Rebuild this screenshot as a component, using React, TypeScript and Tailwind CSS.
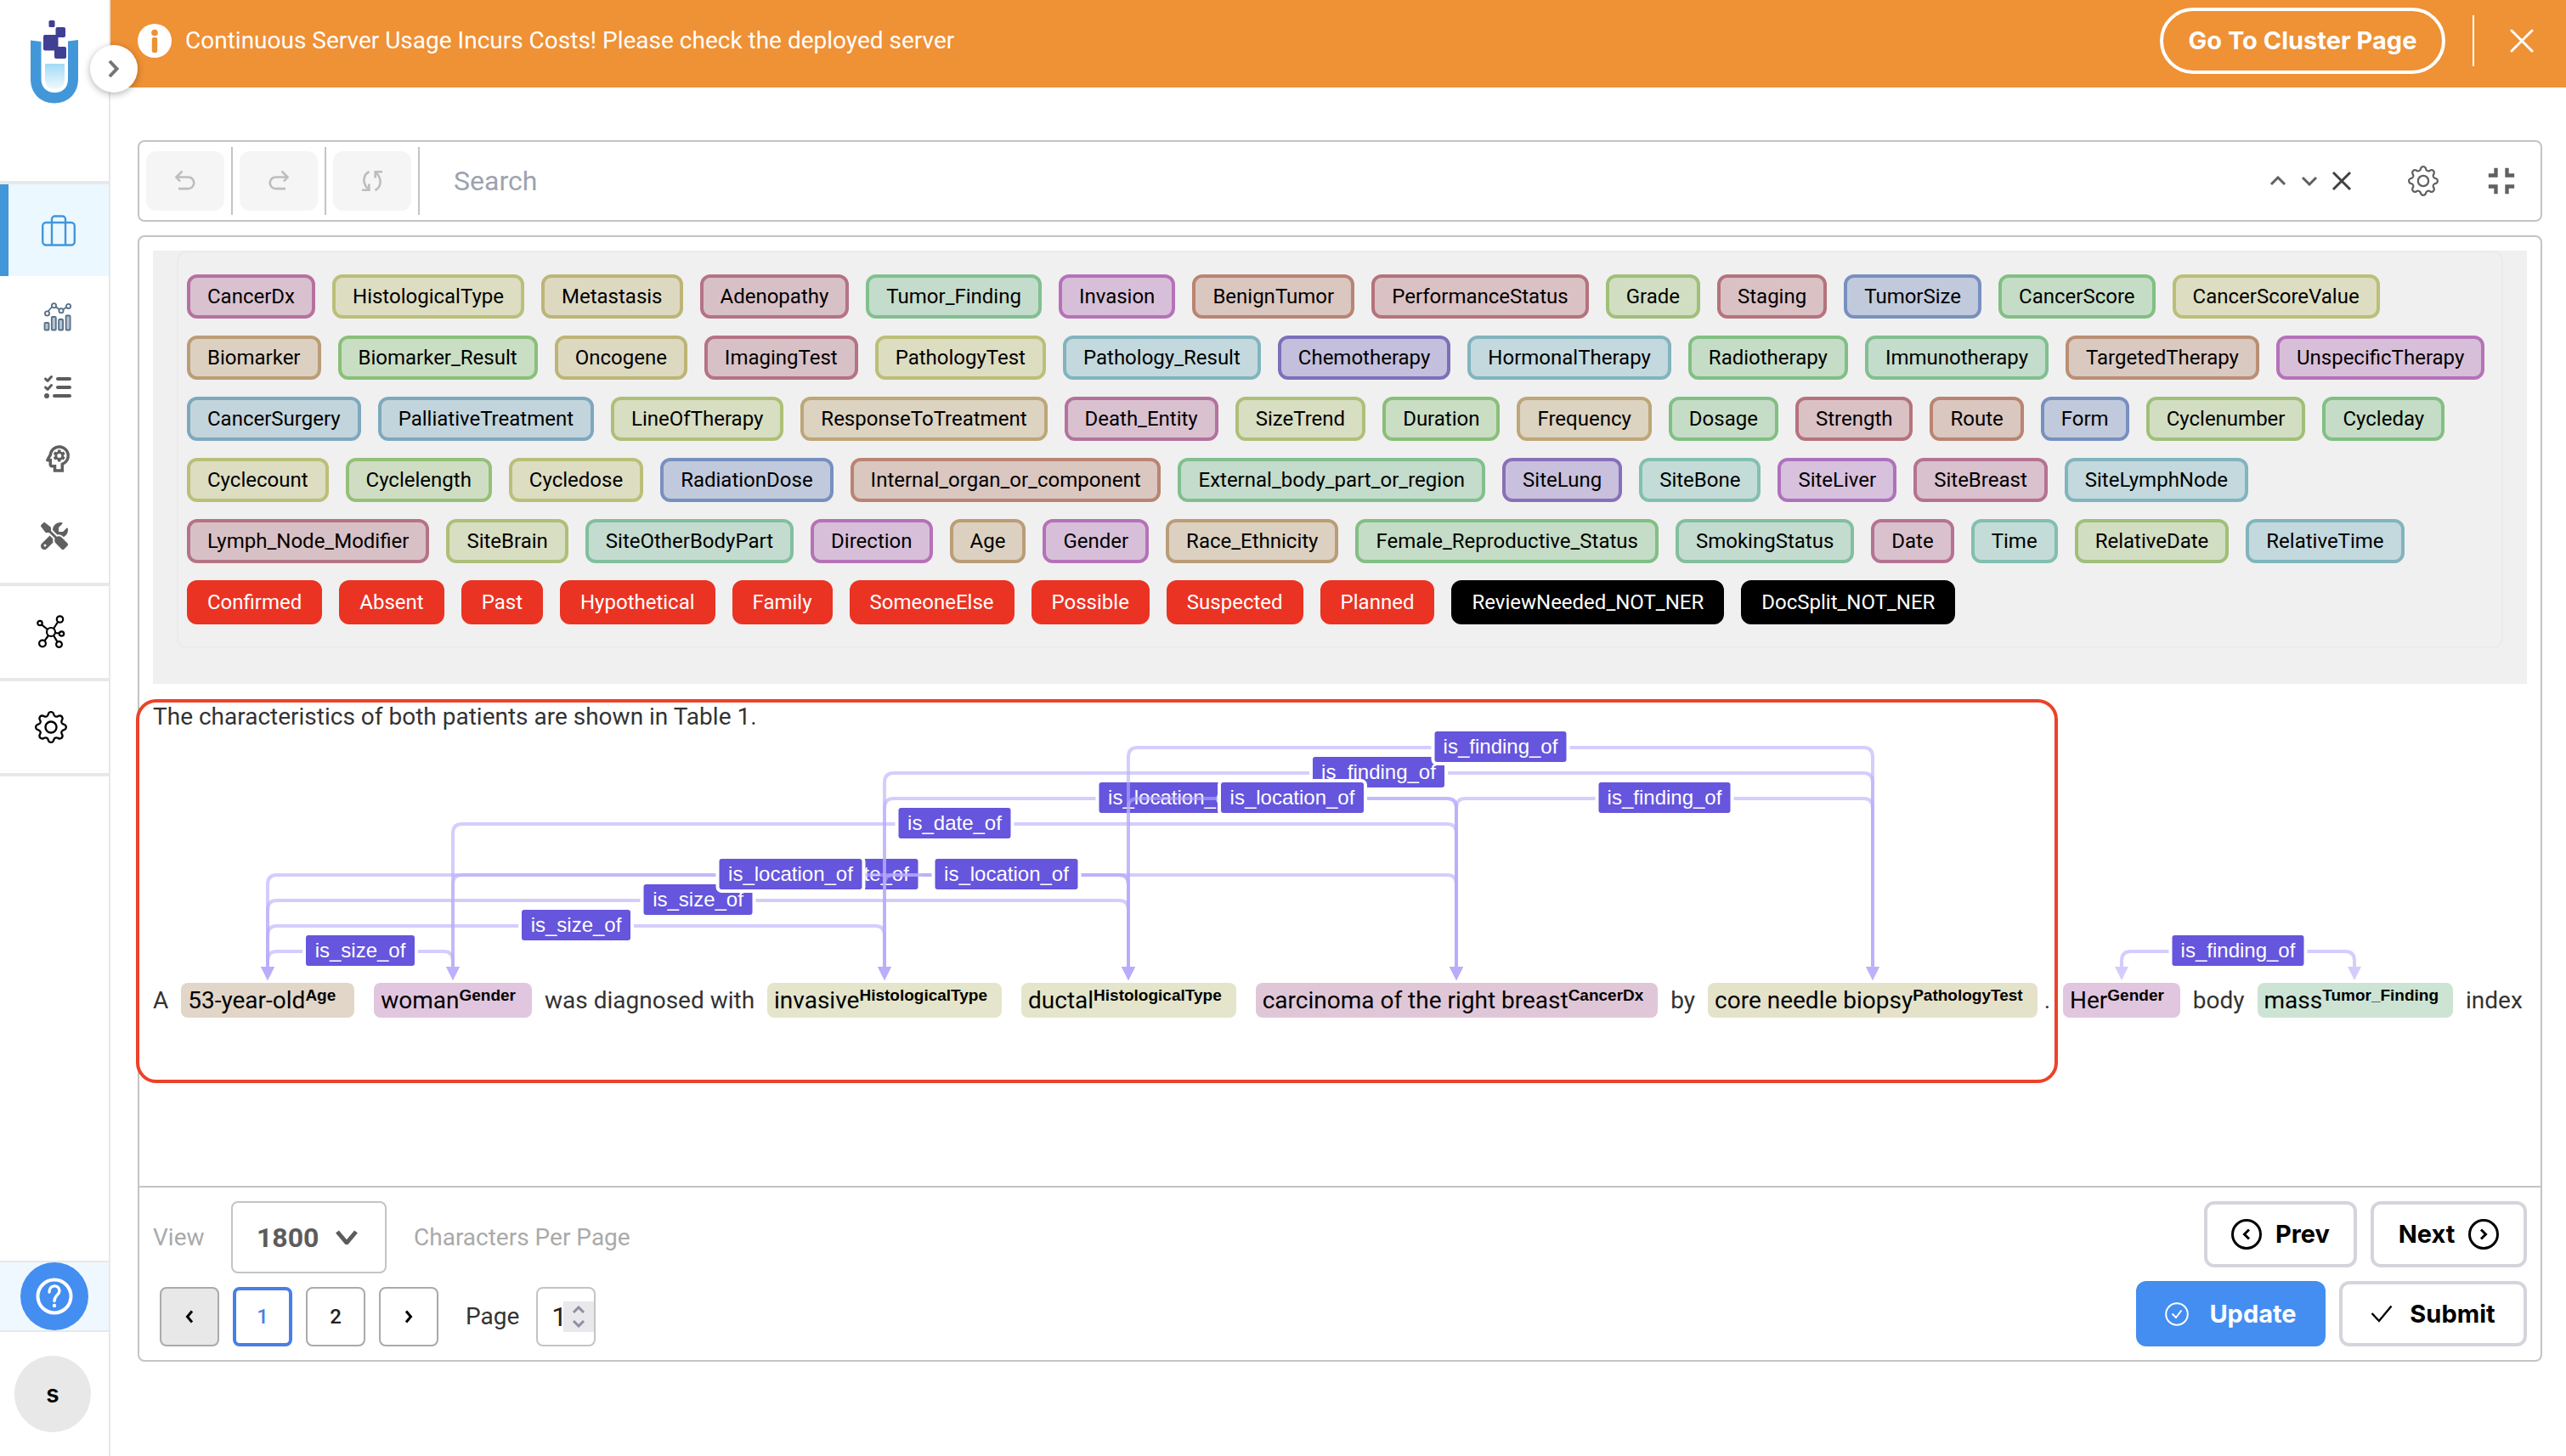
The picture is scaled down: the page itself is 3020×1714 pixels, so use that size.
import React from "react";
import { BsGear } from "react-icons/bs";
import { FaListCheck, FaScrewdriverWrench } from "react-icons/fa6";
import { MdFullscreenExit, MdOutlinePsychology } from "react-icons/md";

const PINK = "border-[#b5729e] bg-[#d9c1d0]";
const ROSE = "border-[#b57386] bg-[#d8c1c6]";
const RED = "border-[#b5737d] bg-[#dac1c4]";
const BERRY = "border-[#b57393] bg-[#d9c1cd]";
const PURPLE = "border-[#b572b8] bg-[#d8bfd9]";
const VIOLET = "border-[#8870b9] bg-[#c8c0dc]";
const INDIGO = "border-[#7b70b9] bg-[#c3bfdc]";
const BLUE = "border-[#7890bf] bg-[#c1cadc]";
const STEEL = "border-[#7ea8bd] bg-[#c3d5dc]";
const CYAN = "border-[#82b4be] bg-[#c3d9de]";
const TEAL = "border-[#82bfb0] bg-[#c4dcd8]";
const MINT = "border-[#82bf9f] bg-[#c4dcd0]";
const SEA = "border-[#82bf90] bg-[#c4dccb]";
const GREEN = "border-[#82bf84] bg-[#c5ddc6]";
const LEAF = "border-[#8abf7a] bg-[#c9dec3]";
const LIME = "border-[#a0bf79] bg-[#d2dec2]";
const MOSS = "border-[#aebf78] bg-[#d8dec2]";
const OLIVE = "border-[#bbbf78] bg-[#ddddc2]";
const KHAKI = "border-[#bdb577] bg-[#ddd9c1]";
const SAND = "border-[#bda678] bg-[#dcd3c1]";
const TAN = "border-[#ba9d77] bg-[#dcd1c1]";
const CLAY = "border-[#ba8f74] bg-[#dac9c1]";
const BRICK = "border-[#ba8472] bg-[#dac7c0]";
const ALERT = "border-[#ea3323] bg-[#ea3323] text-white";
const BLACK = "border-black bg-black text-white";

const LABELS: [string, string][] = [
  ["CancerDx", PINK],
  ["HistologicalType", OLIVE],
  ["Metastasis", KHAKI],
  ["Adenopathy", ROSE],
  ["Tumor_Finding", SEA],
  ["Invasion", PURPLE],
  ["BenignTumor", BRICK],
  ["PerformanceStatus", RED],
  ["Grade", LIME],
  ["Staging", RED],
  ["TumorSize", BLUE],
  ["CancerScore", GREEN],
  ["CancerScoreValue", OLIVE],
  ["Biomarker", TAN],
  ["Biomarker_Result", LEAF],
  ["Oncogene", KHAKI],
  ["ImagingTest", ROSE],
  ["PathologyTest", OLIVE],
  ["Pathology_Result", CYAN],
  ["Chemotherapy", INDIGO],
  ["HormonalTherapy", CYAN],
  ["Radiotherapy", GREEN],
  ["Immunotherapy", SEA],
  ["TargetedTherapy", CLAY],
  ["UnspecificTherapy", PURPLE],
  ["CancerSurgery", STEEL],
  ["PalliativeTreatment", STEEL],
  ["LineOfTherapy", MOSS],
  ["ResponseToTreatment", SAND],
  ["Death_Entity", PINK],
  ["SizeTrend", MOSS],
  ["Duration", LEAF],
  ["Frequency", SAND],
  ["Dosage", GREEN],
  ["Strength", RED],
  ["Route", BRICK],
  ["Form", BLUE],
  ["Cyclenumber", LIME],
  ["Cycleday", GREEN],
  ["Cyclecount", OLIVE],
  ["Cyclelength", "border-[#96bf79] bg-[#cfdec3]"],
  ["Cycledose", OLIVE],
  ["RadiationDose", BLUE],
  ["Internal_organ_or_component", BRICK],
  ["External_body_part_or_region", SEA],
  ["SiteLung", VIOLET],
  ["SiteBone", TEAL],
  ["SiteLiver", "border-[#ae72bc] bg-[#d7c1dd]"],
  ["SiteBreast", BERRY],
  ["SiteLymphNode", CYAN],
  ["Lymph_Node_Modifier", ROSE],
  ["SiteBrain", MOSS],
  ["SiteOtherBodyPart", MINT],
  ["Direction", PURPLE],
  ["Age", TAN],
  ["Gender", PURPLE],
  ["Race_Ethnicity", TAN],
  ["Female_Reproductive_Status", GREEN],
  ["SmokingStatus", MINT],
  ["Date", BERRY],
  ["Time", TEAL],
  ["RelativeDate", LIME],
  ["RelativeTime", CYAN],
  ["Confirmed", ALERT],
  ["Absent", ALERT],
  ["Past", ALERT],
  ["Hypothetical", ALERT],
  ["Family", ALERT],
  ["SomeoneElse", ALERT],
  ["Possible", ALERT],
  ["Suspected", ALERT],
  ["Planned", ALERT],
  ["ReviewNeeded_NOT_NER", BLACK],
  ["DocSplit_NOT_NER", BLACK],
];

const LABEL_WIDTHS: Record<string, number> = {
  is_size_of: 128,
  is_date_of: 132,
  is_finding_of: 155,
  is_location_of: 168,
};

// [from x, to x, rail y, relation], in the order they are painted
const RELATIONS: [number, number, number, string][] = [
  [135, 353, 290, "is_size_of"],
  [135, 861, 260, "is_size_of"],
  [135, 1148, 230, "is_size_of"],
  [135, 1534, 200, "is_date_of"],
  [353, 1148, 200, "is_location_of"],
  [353, 1534, 140, "is_date_of"],
  [861, 1148, 200, "is_location_of"],
  [861, 1534, 110, "is_location_of"],
  [861, 2024, 80, "is_finding_of"],
  [1148, 1534, 110, "is_location_of"],
  [1148, 2024, 50, "is_finding_of"],
  [1534, 2024, 110, "is_finding_of"],
  [2317, 2591, 290, "is_finding_of"],
];

function Relations() {
  return (
    <svg
      className="pointer-events-none absolute left-0 top-[7px] overflow-visible"
      width="2794"
      height="400"
      viewBox="0 0 2794 400"
    >
      {RELATIONS.map(([a, b, y, name], i) => {
        const w = LABEL_WIDTHS[name];
        const mid = (a + b) / 2;
        return (
          <g key={i}>
            <g opacity="0.6">
              <path
                d={`M${a} 309V${y + 11}Q${a} ${y} ${a + 11} ${y}H${b - 11}Q${b} ${y} ${b} ${y + 11}V309`}
                fill="none"
                stroke="#b8adfb"
                strokeWidth="4"
              />
              <path d={`M${a - 8} 308h16l-8 16zM${b - 8} 308h16l-8 16z`} fill="#b8adfb" />
            </g>
            <rect
              x={mid - w / 2}
              y={y - 19}
              width={w}
              height="36"
              rx="3"
              fill="#6655dd"
              stroke="white"
              strokeWidth="8"
              paintOrder="stroke"
            />
            <text
              x={mid}
              y={y + 7}
              textAnchor="middle"
              fill="white"
              fontSize="24"
              fontFamily='"Liberation Sans", Arial, sans-serif'
            >
              {name}
            </text>
          </g>
        );
      })}
    </svg>
  );
}

function Entity({ text, type, tone, pad = "pr-[17px]" }: { text: string; type: string; tone: string; pad?: string }) {
  return (
    <span className={`mx-2 inline-block h-[41px] rounded-lg pl-2 leading-[41px] text-black ${pad} ${tone}`}>
      {text}
      <sup className="font-['Liberation_Sans',sans-serif] text-[19px] leading-none font-bold">{type}</sup>
    </span>
  );
}

function Logo() {
  return (
    <svg width="56" height="98" viewBox="36 24 56 98">
      <defs>
        <linearGradient id="liquid" x1="0" y1="0" x2="0" y2="1">
          <stop offset="0" stopColor="#a3daf7" />
          <stop offset="1" stopColor="#eff9fe" />
        </linearGradient>
      </defs>
      <path
        d="M36 47.5L48.500 49V93C48.500 103 55 109 64.500 109S80 103 80 93V48.500L92 47V93C92 110 80 121.500 64 121.500S36 110 36 93Z"
        fill="#4297d9"
      />
      <path d="M53 75H76V93C76 101 71 105 64.500 105S53 101 53 93Z" fill="url(#liquid)" />
      <g fill="#3f3f94">
        <rect x="57.500" y="24" width="7" height="8" rx="1.500" />
        <rect x="65.500" y="32" width="11.500" height="12" rx="2" />
        <rect x="51" y="41" width="17.500" height="18.500" rx="2" />
        <rect x="64" y="55" width="14" height="14" rx="2" />
      </g>
    </svg>
  );
}

function BriefcaseIcon() {
  return (
    <svg width="40" height="37" viewBox="0 0 40 37" fill="none" stroke="#4297d9" strokeWidth="2.400">
      <rect x="1.200" y="9" width="37.600" height="26.500" rx="4" />
      <path d="M12 35V5a3.500 3.500 0 0 1 3.500-3.500h9A3.500 3.500 0 0 1 28 5V35" />
    </svg>
  );
}

function AnalyticsIcon() {
  return (
    <svg width="34" height="34" viewBox="0 0 34 34" fill="none" stroke="#56708a" strokeWidth="1.800">
      <path d="M5.500 10.500L10.500 5M14.500 5L19 8.500M23 8.500L27.500 5.500" />
      <circle cx="4.500" cy="13" r="2.600" />
      <circle cx="12.500" cy="3.800" r="2.600" />
      <circle cx="21" cy="9.800" r="2.600" />
      <circle cx="29.500" cy="4.400" r="2.600" />
      <g fill="#b9c3cd">
        <rect x="1.500" y="24" width="5" height="8.500" rx="1" />
        <rect x="9.800" y="17" width="5" height="15.500" rx="1" />
        <rect x="18.100" y="20" width="5" height="12.500" rx="1" />
        <rect x="26.600" y="15.500" width="5" height="17" rx="1" />
      </g>
    </svg>
  );
}

function NetworkIcon() {
  return (
    <svg width="36" height="40" viewBox="0 0 36 40" fill="none" stroke="black" strokeWidth="2.200">
      <circle cx="18" cy="20" r="5" />
      <circle cx="5" cy="9.500" r="2.700" />
      <circle cx="28.500" cy="5" r="3.700" />
      <circle cx="30.500" cy="22" r="2.700" />
      <circle cx="8" cy="33.500" r="3.900" />
      <circle cx="27.500" cy="34.500" r="3.400" />
      <path d="M7 11.300L14 17M21 16L26.200 8M23 21L27.800 21.600M15 24L10.500 30.300M21 24L25.500 31.600" />
    </svg>
  );
}

function UndoIcon() {
  return (
    <svg width="26" height="26" viewBox="0 0 26 26" fill="none" stroke="#bdbdbd" strokeWidth="2.600">
      <path d="M9.500 1.500L2.500 8.500L7 13.500M2.500 8.500H16.500a6.800 6.800 0 0 1 0 13.600H5" />
    </svg>
  );
}

function RedoIcon() {
  return (
    <svg width="26" height="26" viewBox="0 0 26 26" fill="none" stroke="#bdbdbd" strokeWidth="2.600">
      <path d="M16.500 1.500L23.500 8.500L19 13.500M23.500 8.500H9.500a6.800 6.800 0 0 0 0 13.600H21" />
    </svg>
  );
}

function ResetIcon() {
  return (
    <svg width="26" height="26" viewBox="0 0 26 26" fill="none" stroke="#bdbdbd" strokeWidth="2.600">
      <path d="M9.500 2C3 5.500 .5 14 8 22.500M16.500 24C23 20.500 25.500 12 18 3.500" />
      <path d="M1 23.700H9.300V16.500M25 2.300H16.700V9.500" />
    </svg>
  );
}

function Chevron({ d, w = 20, h = 12, stroke = 3, color = "#606060" }: { d: "up" | "down"; w?: number; h?: number; stroke?: number; color?: string }) {
  return (
    <svg width={w} height={h} viewBox={`0 0 ${w} ${h}`} fill="none" stroke={color} strokeWidth={stroke}>
      {d === "up" ? (
        <path d={`M2 ${h - 2}L${w / 2} 2L${w - 2} ${h - 2}`} />
      ) : (
        <path d={`M2 2L${w / 2} ${h - 2}L${w - 2} 2`} />
      )}
    </svg>
  );
}

function CircleArrow({ dir }: { dir: "left" | "right" }) {
  return (
    <svg width="36" height="36" viewBox="0 0 36 36" fill="none" stroke="black" strokeWidth="3">
      <circle cx="18" cy="18" r="16.500" />
      <path d={dir === "left" ? "M21 12.500L15.500 18L21 23.500" : "M15 12.500L20.500 18L15 23.500"} />
    </svg>
  );
}

function Sidebar() {
  return (
    <aside className="relative z-10 flex w-[130px] shrink-0 flex-col border-r-2 border-[#e8e8e8] bg-white">
      <a href="#home" aria-label="Home" className="flex h-[213px] justify-center pt-6">
        <Logo />
      </a>
      <button
        aria-label="Expand menu"
        className="absolute -right-[34px] top-[53px] flex size-14 items-center justify-center rounded-full bg-white shadow-[0_2px_8px_rgba(0,0,0,0.3)]"
      >
        <svg width="16" height="22" viewBox="0 0 16 22" fill="none" stroke="#757575" strokeWidth="4">
          <path d="M3 2L11.500 11L3 20" />
        </svg>
      </button>
      <nav className="flex flex-col">
        <a
          href="#projects"
          aria-label="Projects"
          className="box-content flex h-[108px] items-center justify-center border-t-4 border-[#e8e8e8] bg-[#ebf8ff]"
        >
          <span className="w-[10px] self-stretch bg-[#4297d9]" />
          <span className="flex flex-1 justify-center">
            <BriefcaseIcon />
          </span>
        </a>
        <a href="#analytics" aria-label="Analytics" className="flex h-[92px] items-center justify-center pl-2 pt-1">
          <AnalyticsIcon />
        </a>
        <a href="#tasks" aria-label="Tasks" className="flex h-[78px] items-center justify-center pl-2">
          <FaListCheck size={32} color="#5c5c5c" />
        </a>
        <a href="#models" aria-label="Models" className="flex h-[90px] items-center justify-center pl-2">
          <MdOutlinePsychology size={42} color="#606060" />
        </a>
        <a href="#tools" aria-label="Tools" className="flex h-[101px] items-center justify-center pb-[10px]">
          <FaScrewdriverWrench size={32} color="#606060" />
        </a>
        <a
          href="#network"
          aria-label="Clusters"
          className="flex h-[112px] items-center justify-center border-t-4 border-[#e8e8e8] pr-2"
        >
          <NetworkIcon />
        </a>
        <a
          href="#settings"
          aria-label="Settings"
          className="flex h-[116px] items-center justify-center border-y-4 border-[#e8e8e8] pr-2"
        >
          <BsGear size={38} color="black" />
        </a>
      </nav>
      <div className="mt-auto flex justify-center border-y-2 border-[#e8e8e8] bg-[#f0f8ff]">
        <button aria-label="Help" className="flex size-20 items-center justify-center rounded-full bg-[#438ef0]">
          <svg width="44" height="44" viewBox="0 0 44 44" fill="none" stroke="white" strokeWidth="4">
            <circle cx="22" cy="22" r="19.500" />
            <path d="M16 17C16 7.500 28 8 28 15.500C28 20.500 22 20.500 22 27.500" strokeWidth="3.400" strokeLinecap="round" />
            <circle cx="22" cy="33" r="2.200" fill="white" stroke="none" />
          </svg>
        </button>
      </div>
      <div className="mb-7 ml-[17px] mt-7 flex size-[90px] items-center justify-center rounded-full bg-[#e8e8e8]">
        <button aria-label="Account" className="font-['Inter',sans-serif] text-[28px] font-semibold text-black">
          s
        </button>
      </div>
    </aside>
  );
}

function Banner() {
  return (
    <div className="flex h-[103px] items-start bg-[#ef9135] pl-8 pr-[38px] text-white">
      <div className="flex h-24 flex-1 items-center">
        <svg width="40" height="40" viewBox="0 0 40 40">
          <circle cx="20" cy="20" r="20" fill="white" />
          <circle cx="20" cy="10.500" r="3.800" fill="#ef9135" />
          <rect x="16.800" y="16" width="6.400" height="18" rx="2" fill="#ef9135" />
        </svg>
        <p className="ml-4 text-[28px] leading-10">
          Continuous Server Usage Incurs Costs! Please check the deployed server
        </p>
        <button className="ml-auto h-[78px] w-[336px] rounded-full border-4 border-white font-['Inter',sans-serif] text-[29px] font-bold">
          Go To Cluster Page
        </button>
        <span className="ml-8 h-[60px] w-[2px] bg-white" />
        <button aria-label="Close" className="ml-[42px]">
          <svg width="28" height="28" viewBox="0 0 28 28" fill="none" stroke="white" strokeWidth="3" strokeLinecap="round">
            <path d="M2 2L26 26M26 2L2 26" />
          </svg>
        </button>
      </div>
    </div>
  );
}

function Toolbar() {
  const tools: [string, React.ReactNode][] = [
    ["Undo", <UndoIcon />],
    ["Redo", <RedoIcon />],
    ["Reset", <ResetIcon />],
  ];
  return (
    <div className="flex h-24 items-center rounded-lg border-2 border-[#c4c4c4]">
      {tools.map(([name, icon]) => (
        <div key={name} className="flex h-20 items-center border-r-2 border-[#c4c4c4] px-2">
          <button
            aria-label={name}
            disabled
            className="flex h-[70px] w-[92px] items-center justify-center rounded-xl bg-[#f5f5f5]"
          >
            {icon}
          </button>
        </div>
      ))}
      <input
        aria-label="Search"
        placeholder="Search"
        className="ml-10 h-16 min-w-0 flex-1 text-[32px] outline-none placeholder:text-[#9ca3af]"
      />
      <button aria-label="Previous match">
        <Chevron d="up" />
      </button>
      <button aria-label="Next match" className="ml-[17px]">
        <Chevron d="down" />
      </button>
      <button aria-label="Clear search" className="ml-4">
        <svg width="24" height="24" viewBox="0 0 24 24" fill="none" stroke="#404040" strokeWidth="3">
          <path d="M2 2L22 22M22 2L2 22" />
        </svg>
      </button>
      <button aria-label="Editor settings" className="ml-[66px]">
        <BsGear size={36} color="#606060" />
      </button>
      <button aria-label="Exit full screen" className="ml-[48px] mr-[20px]">
        <MdFullscreenExit size={52} color="#606060" />
      </button>
    </div>
  );
}

function LabelPanel() {
  return (
    <section aria-label="Labels" className="bg-[#f0f0f0] px-7 pb-[42px]">
      <div className="flex flex-wrap gap-5 rounded-xl border-2 border-[#ebebeb] px-[10px] py-[26px]">
        {LABELS.map(([name, tone]) => (
          <button key={name} className={`h-[52px] rounded-xl border-4 px-5 text-2xl leading-[44px] ${tone}`}>
            {name}
          </button>
        ))}
      </div>
    </section>
  );
}

function Document() {
  return (
    <div className="relative flex-1">
      <div className="pointer-events-none absolute -left-5 top-[18px] h-[452px] w-[2262px] rounded-[24px] border-4 border-[#ec4228]" />
      <div className="relative mt-[18px] text-[28px] leading-[41px] whitespace-nowrap text-[#333]">
        <Relations />
        <p>The characteristics of both patients are shown in Table 1.</p>
        <p className="mt-[293px]">
          A <Entity text="53-year-old" type="Age" tone="bg-[#e2d6c8]" pad="pr-[22px]" />{" "}
          <Entity text="woman" type="Gender" tone="bg-[#e1c6df]" pad="pr-[19px]" /> was diagnosed with{" "}
          <Entity text="invasive" type="HistologicalType" tone="bg-[#e4e5cb]" />{" "}
          <Entity text="ductal" type="HistologicalType" tone="bg-[#e4e5cb]" />{" "}
          <Entity text="carcinoma of the right breast" type="CancerDx" tone="bg-[#e0c7d8]" /> by{" "}
          <Entity text="core needle biopsy" type="PathologyTest" tone="bg-[#e5e2ca]" />.{" "}
          <Entity text="Her" type="Gender" tone="bg-[#e1c6df]" pad="pr-[19px]" /> body{" "}
          <Entity text="mass" type="Tumor_Finding" tone="bg-[#cde4d4]" /> index
        </p>
      </div>
    </div>
  );
}

const PAGE_BUTTON = "flex size-[70px] items-center justify-center rounded-lg text-2xl font-medium";
const ACTION = "flex items-center justify-center rounded-xl font-['Inter',sans-serif] text-[29px] font-bold";

function Footer() {
  return (
    <footer className="flex justify-between border-t-2 border-[#c4c4c4] px-4 pb-4 pt-4">
      <div>
        <div className="flex items-center text-[28px] text-[#aaa]">
          <label htmlFor="chars" className="w-[92px]">
            View
          </label>
          <div className="relative">
            <select
              id="chars"
              defaultValue="1800"
              className="h-[85px] w-[183px] appearance-none rounded-lg border-2 border-[#c4c4c4] bg-white pl-7 text-[32px] font-bold text-[#5c5c5c]"
            >
              <option>1800</option>
            </select>
            <span className="pointer-events-none absolute right-[34px] top-[34px]">
              <Chevron d="down" w={26} h={17} stroke={5} color="#5c5c5c" />
            </span>
          </div>
          <span className="ml-8">Characters Per Page</span>
        </div>
        <div className="ml-2 mt-4 flex items-center gap-4">
          <button aria-label="Previous page" disabled className={`${PAGE_BUTTON} border-2 border-[#aaa] bg-[#e8e8e8]`}>
            <svg width="12" height="16" viewBox="0 0 12 16" fill="none" stroke="black" strokeWidth="3">
              <path d="M9 1.500L3.500 8L9 14.500" />
            </svg>
          </button>
          <button aria-current="page" className={`${PAGE_BUTTON} border-4 border-[#487fe8] text-[#487fe8]`}>
            1
          </button>
          <button className={`${PAGE_BUTTON} border-2 border-[#aaa] text-[#222]`}>2</button>
          <button aria-label="Next page" className={`${PAGE_BUTTON} border-2 border-[#aaa]`}>
            <svg width="12" height="16" viewBox="0 0 12 16" fill="none" stroke="black" strokeWidth="3">
              <path d="M3 1.500L8.500 8L3 14.500" />
            </svg>
          </button>
          <label htmlFor="page" className="ml-4 text-[28px] text-[#333]">
            Page
          </label>
          <div className="relative ml-1">
            <input
              id="page"
              inputMode="numeric"
              defaultValue="1"
              className="block size-[70px] rounded-lg border-2 border-[#c4c4c4] pl-4 text-[32px] text-[#222] outline-none"
            />
            <span className="pointer-events-none absolute right-[2px] top-[17px] flex h-9 w-9 flex-col items-center justify-between bg-[#e9e9ed] py-[5px]">
              <Chevron d="up" w={16} h={10} stroke={3} color="#8f8f9d" />
              <Chevron d="down" w={16} h={10} stroke={3} color="#8f8f9d" />
            </span>
          </div>
        </div>
      </div>
      <div className="flex flex-col gap-4">
        <div className="flex justify-end gap-4">
          <button className={`${ACTION} h-[78px] w-[180px] gap-4 border-4 border-[#d4d5dc] text-black`}>
            <CircleArrow dir="left" />
            Prev
          </button>
          <button className={`${ACTION} h-[78px] w-[184px] gap-4 border-4 border-[#d4d5dc] text-black`}>
            Next
            <CircleArrow dir="right" />
          </button>
        </div>
        <div className="flex justify-end gap-4">
          <button className={`${ACTION} h-[77px] w-[223px] gap-6 bg-[#438ef0] text-white`}>
            <svg width="28" height="28" viewBox="0 0 28 28" fill="none" stroke="white" strokeWidth="2">
              <circle cx="14" cy="14" r="12.800" />
              <path d="M8.500 13.500L13 18L19.500 9.500" />
            </svg>
            Update
          </button>
          <button className={`${ACTION} h-[77px] w-[221px] gap-5 border-4 border-[#d4d5dc] text-black`}>
            <svg width="26" height="22" viewBox="0 0 26 22" fill="none" stroke="black" strokeWidth="2.400">
              <path d="M1.500 10L10 19L24.500 1.500" />
            </svg>
            Submit
          </button>
        </div>
      </div>
    </footer>
  );
}

export default function App() {
  return (
    <div className="flex min-h-screen bg-white font-['Roboto',sans-serif] text-black">
      <Sidebar />
      <div className="flex min-w-0 flex-1 flex-col">
        <Banner />
        <main className="flex flex-1 flex-col gap-4 pb-[111px] pl-8 pr-7 pt-[62px]">
          <Toolbar />
          <div className="flex flex-1 flex-col rounded-lg border-2 border-[#c4c4c4]">
            <div className="flex flex-1 flex-col px-4 pt-4">
              <LabelPanel />
              <Document />
            </div>
            <Footer />
          </div>
        </main>
      </div>
    </div>
  );
}
